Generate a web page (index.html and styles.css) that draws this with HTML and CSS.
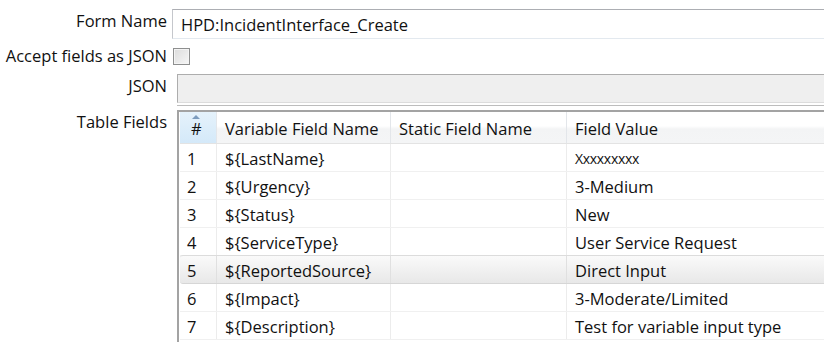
FILE: index.html
```html
<!DOCTYPE html>
<html lang="en">
<head>
    <meta charset="UTF-8">
    <title>Form</title>
    <link rel="stylesheet" href="styles.css">
</head>
<body>
<div class="form">
    <label class="lbl lbl-form">Form Name</label>
    <div class="field"><div class="text-input">HPD:IncidentInterface_Create</div></div>

    <label class="lbl">Accept fields as JSON</label>
    <div class="field field-check"><span class="check"></span></div>

    <label class="lbl lbl-json">JSON</label>
    <div class="field"><div class="json-box"></div></div>

    <label class="lbl lbl-table">Table Fields</label>
    <div class="field">
        <div class="table">
            <div class="row head">
                <div class="cell num sorted"><span class="arrow"></span>#</div>
                <div class="cell var">Variable Field Name</div>
                <div class="cell stat">Static Field Name</div>
                <div class="cell val">Field Value</div>
            </div>
            <div class="row">
                <div class="cell num">1</div>
                <div class="cell var">${LastName}</div>
                <div class="cell stat"></div>
                <div class="cell val small">Xxxxxxxxx</div>
            </div>
            <div class="row">
                <div class="cell num">2</div>
                <div class="cell var">${Urgency}</div>
                <div class="cell stat"></div>
                <div class="cell val">3-Medium</div>
            </div>
            <div class="row">
                <div class="cell num">3</div>
                <div class="cell var">${Status}</div>
                <div class="cell stat"></div>
                <div class="cell val">New</div>
            </div>
            <div class="row">
                <div class="cell num">4</div>
                <div class="cell var">${ServiceType}</div>
                <div class="cell stat"></div>
                <div class="cell val">User Service Request</div>
            </div>
            <div class="row selected">
                <div class="cell num">5</div>
                <div class="cell var">${ReportedSource}</div>
                <div class="cell stat"></div>
                <div class="cell val">Direct Input</div>
            </div>
            <div class="row">
                <div class="cell num">6</div>
                <div class="cell var">${Impact}</div>
                <div class="cell stat"></div>
                <div class="cell val">3-Moderate/Limited</div>
            </div>
            <div class="row">
                <div class="cell num">7</div>
                <div class="cell var">${Description}</div>
                <div class="cell stat"></div>
                <div class="cell val">Test for variable input type</div>
            </div>
        </div>
    </div>
</div>
</body>
</html>
```

FILE: styles.css
```css
body{
    margin: 0;
    background: #fff;
    font-family: "Open Sans", "Noto Sans", sans-serif;
    font-size: 16.5px;
    color: #111;
    overflow: hidden;
    width: 824px;
    height: 342px;
}
.form{
    display: grid;
    grid-template-columns: 167px 1fr;
    grid-template-rows: 30px 34px 36px auto;
    column-gap: 5px;
    padding-top: 9px;
}
.lbl{
    text-align: right;
    line-height: 20px;
    align-self: center;
    white-space: nowrap;
}
.lbl-form{ padding-bottom: 6px; }
.lbl-json{ padding-bottom: 10px; }
.lbl-table{ align-self: start; padding-top: 3px; }

.text-input{
    height: 28px;
    border: 1px solid #c5c7cc;
    border-right: none;
    border-top-color: #acaeb3;
    border-bottom-color: #e3e9ef;
    padding-left: 8px;
    line-height: 30px;
    background: #fff;
}
.field-check{
    display: flex;
    align-items: center;
}
.check{
    display: block;
    width: 15px;
    height: 15px;
    margin-left: 1px;
    border: 1px solid #8e8f8f;
    background: linear-gradient(135deg, #dcdcdc, #f6f6f6);
    box-shadow: inset 0 0 0 1px #f4f4f4;
}
.json-box{
    margin-top: 1px;
    margin-left: 5px;
    height: 27px;
    border: 1px solid #adadad;
    border-right: none;
    border-bottom-color: #dcdcdc;
    background: #efefef;
    box-shadow: 0 2px 0 #fff, 0 3px 0 #bdbdbd;
}
.table{
    height: 230px;
    overflow: hidden;
    margin-top: 1px;
    margin-left: 5px;
    border-top: 2px solid #a3a3a3;
    border-left: 2px solid #a3a3a3;
    padding-left: 1px;
}
.row{
    display: flex;
    height: 27px;
    border-bottom: 1px solid #f0f0f0;
    line-height: 29px;
}
.cell{
    flex: none;
    padding-left: 8px;
    border-right: 1px solid #ececec;
    white-space: nowrap;
}
.num{ width: 37px; padding-left: 7px; box-sizing: border-box; }
.var{ width: 174px; box-sizing: border-box; }
.stat{ width: 176px; box-sizing: border-box; }
.val{ flex: 1; border-right: none; }
.small{ font-size: 14px; letter-spacing: -0.3px; }

.head{
    height: 31px;
    line-height: 34px;
    border-bottom: 1px solid #e3e3e3;
    background: linear-gradient(#fff 0%, #fff 45%, #f3f4f5 55%, #f4f5f6 100%);
}
.head .cell{ border-right-color: #e3e6ea; }
.sorted{
    position: relative;
    background: linear-gradient(#e5f2fb, #d4e9f9);
    border-right: 1px solid #c0d9ee;
    padding-left: 11px;
}
.arrow{
    position: absolute;
    left: 12px;
    top: 3px;
    width: 0;
    height: 0;
    border-left: 4px solid transparent;
    border-right: 4px solid transparent;
    border-bottom: 4px solid #7b9bbd;
}
.selected{
    border-radius: 3px 0 0 3px;
    border-top: 1px solid #dcdcdc;
    border-bottom: 1px solid #d6d6d6;
    margin-top: -1px;
    background: linear-gradient(#fafafa, #e8e8e8);
}
.selected .cell{ border-right-color: #e0e0e0; }
```
